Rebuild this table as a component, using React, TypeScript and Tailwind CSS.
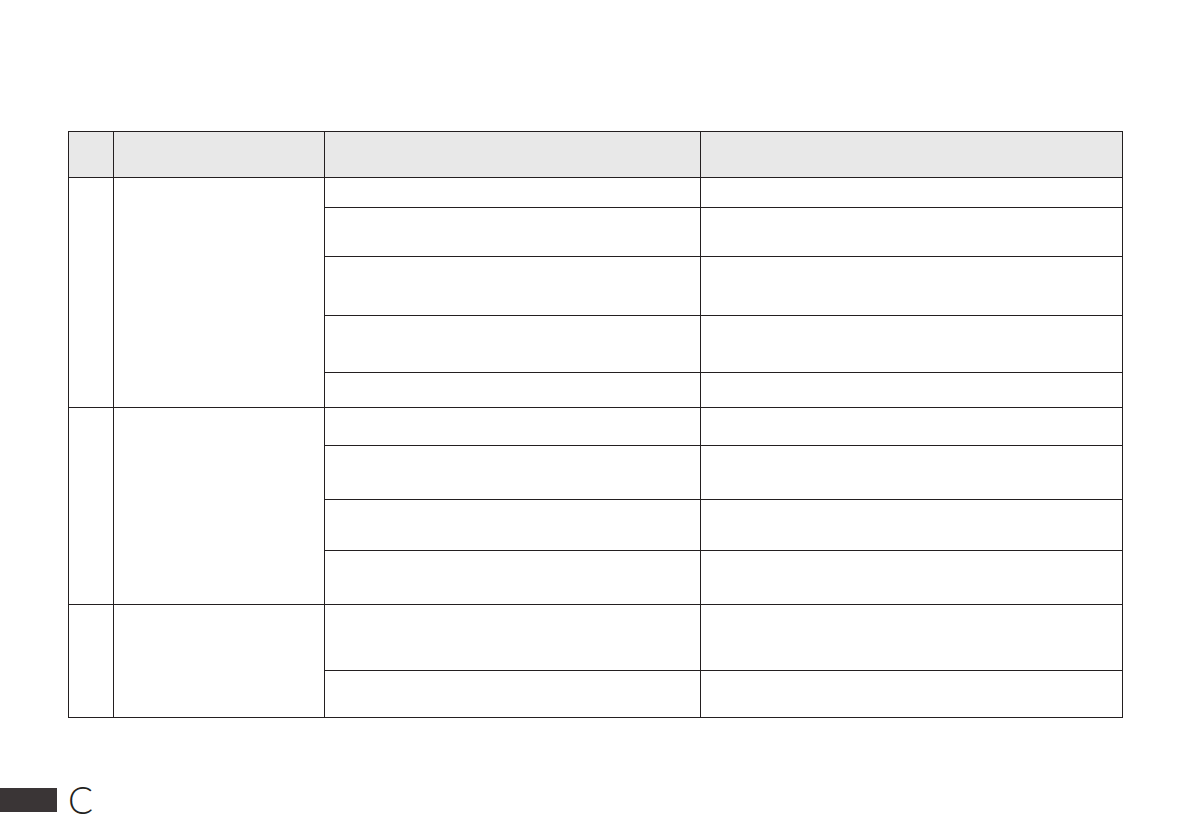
import React from "react";

const groups: number[][] = [
  [30, 49, 59, 57, 35],
  [38, 54, 51, 54],
  [66, 47],
];

const b = "border border-[#231f20]";

export default function App() {
  return (
    <div className="w-[1191px] h-[839px] bg-white overflow-hidden flex flex-col" style={{ fontFamily: "'Liberation Sans', Arial, sans-serif" }}>
      <div className="pt-[131px] pl-[68px]">
        <table className="table-fixed border-collapse w-[1054px]">
          <colgroup>
            <col className="w-[45px]" />
            <col className="w-[211px]" />
            <col className="w-[376px]" />
            <col className="w-[422px]" />
          </colgroup>
          <thead>
            <tr className="h-[46px] bg-[#e8e8e8]">
              <th className={b}></th>
              <th className={b}></th>
              <th className={b}></th>
              <th className={b}></th>
            </tr>
          </thead>
          <tbody>
            {groups.map((g, gi) =>
              g.map((h, ri) => (
                <tr key={`${gi}-${ri}`} style={{ height: h }}>
                  {ri === 0 && (
                    <>
                      <td className={b} rowSpan={g.length}></td>
                      <td className={b} rowSpan={g.length}></td>
                    </>
                  )}
                  <td className={b}></td>
                  <td className={b}></td>
                </tr>
              ))
            )}
          </tbody>
        </table>
      </div>
      <div className="mt-[63px] flex items-center gap-[11px]">
        <div className="w-[57px] h-[24px] bg-[#3a3536]" />
        <span className="text-[37px] leading-none text-[#231f20] font-light" style={{ fontFamily: "Lato, 'Noto Sans', sans-serif" }}>
          C
        </span>
      </div>
    </div>
  );
}
